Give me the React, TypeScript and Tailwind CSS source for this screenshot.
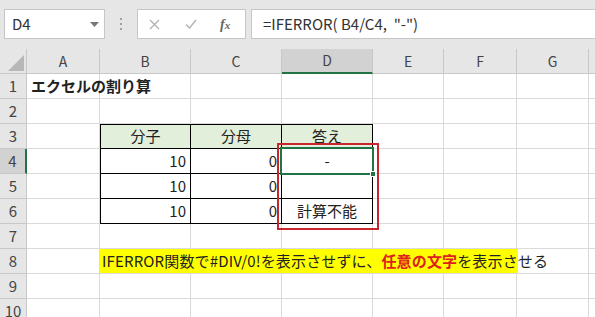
const font = { fontFamily: '"Noto Sans CJK JP", "Noto Sans", sans-serif' }

const cols = ['A', 'B', 'C', 'D', 'E', 'F', 'G', 'H']
const colW = ['w-[73px]', 'w-[91px]', 'w-[91px]', 'w-[91px]', 'w-[71px]', 'w-[73px]', 'w-[72px]', 'w-[72px]']
const rows = [1, 2, 3, 4, 5, 6, 7, 8, 9, 10]

type Cell = { text?: React.ReactNode; cls?: string }

function cellAt(r: number, c: number): Cell {
  const tb = 'border-black'
  if (r === 1 && c === 0)
    return { text: <span className="pl-[4px] font-bold whitespace-nowrap">エクセルの割り算</span>, cls: 'overflow-visible' }
  if (r >= 3 && r <= 6 && c >= 1 && c <= 3) {
    const borders = `border-r border-b ${tb} ${c === 1 ? 'border-l' : ''} ${r === 3 ? 'border-t' : ''}`
    if (r === 3) {
      const label = ['分子', '分母', '答え'][c - 1]
      return { text: label, cls: `${borders} bg-[#e2efda] justify-center` }
    }
    if (c === 1) return { text: '10', cls: `${borders} justify-end pr-[4px]` }
    if (c === 2) return { text: '0', cls: `${borders} justify-end pr-[4px]` }
    const ans = r === 4 ? '-' : r === 6 ? '計算不能' : ''
    return { text: ans, cls: `${borders} justify-center` }
  }
  if (r === 8 && c === 1)
    return {
      text: (
        <span className="flex h-full items-center whitespace-nowrap bg-white pr-[6px] tracking-[0.15px]">
          <span className="flex h-full items-center bg-[#ffff00] pl-[2px]">
            IFERROR関数で#DIV/0!を表示させずに、
            <span className="font-bold text-[#e0201c]">任意の文字</span>を表示さ
          </span>
          せる
        </span>
      ),
      cls: 'relative z-10 overflow-visible',
    }
  return {}
}

export default function App() {
  return (
    <div className="relative h-[317px] w-[595px] overflow-hidden bg-white text-[#222]" style={font}>
      {/* formula bar */}
      <div className="flex h-[49px] items-start gap-0 bg-[#e6e6e6] pt-[9px]">
        <div className="ml-[4px] flex h-[30px] w-[101px] items-center justify-between border border-[#c6c6c6] bg-white pl-[7px] pr-[5px] text-[15px] text-[#333]">
          <span>D4</span>
          <svg width="9" height="5" viewBox="0 0 9 5">
            <path d="M0 0h9L4.5 5z" fill="#777" />
          </svg>
        </div>
        <div className="ml-[14px] mt-[9px] flex h-[12px] w-[4px] flex-col items-center justify-between">
          <span className="h-[2px] w-[2px] bg-[#a0a0a0]" />
          <span className="h-[2px] w-[2px] bg-[#a0a0a0]" />
          <span className="h-[2px] w-[2px] bg-[#a0a0a0]" />
        </div>
        <div className="ml-[14px] flex h-[30px] w-[109px] items-center border border-[#c6c6c6] bg-white text-[#a8a8a8]">
          <svg className="ml-[11px]" width="11" height="11" viewBox="0 0 11 11">
            <path d="M1 1l9 9M10 1l-9 9" stroke="#b0b0b0" strokeWidth="1.3" />
          </svg>
          <svg className="ml-[25px]" width="12" height="10" viewBox="0 0 12 10">
            <path d="M1 5.5l3.5 3.5L11 1" stroke="#b0b0b0" strokeWidth="1.3" fill="none" />
          </svg>
          <span className="ml-[23px] text-[14px] italic font-bold text-[#666]" style={{ fontFamily: '"Liberation Serif", serif' }}>
            f<span className="text-[11px]">x</span>
          </span>
        </div>
        <div className="ml-[5px] flex h-[30px] flex-1 items-center border-y border-l border-[#c6c6c6] bg-white pl-[11px] text-[15px] text-[#333]">
          =IFERROR( B4/C4,&nbsp; "-")
        </div>
      </div>

      {/* grid */}
      <div className="flex flex-col">
        <div className="flex h-[25px] bg-[#e6e6e6] text-[14px] text-[#444]">
          <div className="relative w-[27px] shrink-0 border-r border-b border-[#c8c8c8]">
            <svg className="absolute bottom-[2px] right-[2px]" width="16" height="16" viewBox="0 0 16 16">
              <path d="M16 0V16H0z" fill="#b7b7b7" />
            </svg>
          </div>
          {cols.map((c, i) => (
            <div
              key={c}
              className={`${colW[i]} flex shrink-0 items-center justify-center border-r border-[#c8c8c8] ${
                c === 'D' ? 'border-b-2 border-b-[#217346] bg-[#d2d2d2]' : 'border-b'
              }`}
            >
              {c === 'H' ? '' : c}
            </div>
          ))}
        </div>
        {rows.map((r) => (
          <div key={r} className="flex h-[25px] text-[15px]">
            <div
              className={`flex w-[27px] shrink-0 items-center justify-center border-b border-[#c8c8c8] text-[15px] text-[#444] ${
                r === 4 ? 'border-r-2 border-r-[#217346] bg-[#d2d2d2]' : 'border-r bg-[#e6e6e6]'
              }`}
            >
              {r}
            </div>
            {cols.map((c, i) => {
              const cell = cellAt(r, i)
              return (
                <div
                  key={c}
                  className={`${colW[i]} flex shrink-0 items-center border-r border-b border-[#dadada] ${cell.cls ?? 'overflow-hidden'}`}
                >
                  {cell.text}
                </div>
              )
            })}
          </div>
        ))}
      </div>

      {/* selected cell */}
      <div className="absolute left-[280px] top-[147px] h-[28px] w-[94px] border-2 border-[#217346]">
        <span className="absolute -bottom-[4px] -right-[4px] h-[6px] w-[6px] border border-white bg-[#217346]" />
      </div>

      {/* red callout */}
      <div className="absolute left-[277px] top-[143px] h-[87px] w-[102px] border-2 border-[#c8262c]" />
    </div>
  )
}
